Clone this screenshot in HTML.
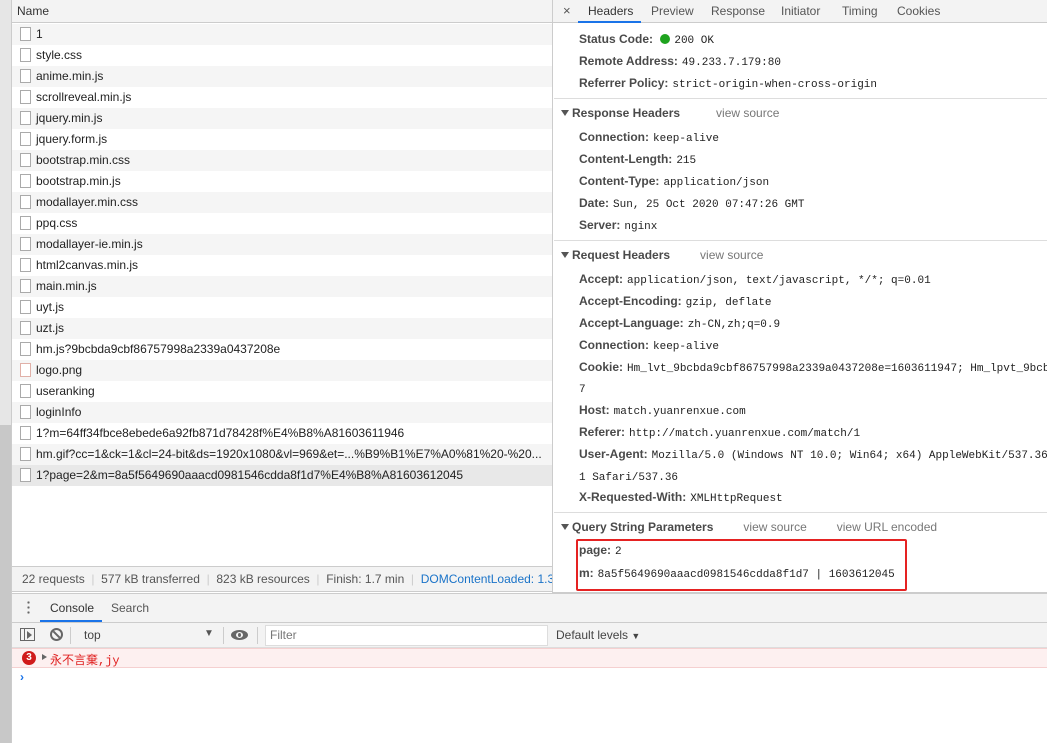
<!DOCTYPE html>
<html><head><meta charset="utf-8"><style>
*{margin:0;padding:0;box-sizing:border-box}
html,body{width:1047px;height:743px;overflow:hidden}
body{background:#fff;font-family:"Liberation Sans","Noto Sans CJK SC",sans-serif;font-size:12px;color:#333;position:relative}
#w{position:absolute;left:0;top:0;width:1047px;height:743px;overflow:hidden}
.a{position:absolute;white-space:nowrap}
.row{position:absolute;left:12px;width:540px;height:21px;line-height:21px;padding-left:24px;color:#222}
.row i{position:absolute;left:8px;top:3px;width:11px;height:14px;border:1px solid #aaa;background:#fff}
.g{background:#f5f5f5}
.hd{position:absolute;left:579px;color:#4a4a4a;font-weight:bold;white-space:nowrap}
.hd span{font-family:"Liberation Mono",monospace;font-weight:normal;font-size:11px;color:#222;margin-left:4px}
.sec{position:absolute;left:561px;font-weight:bold;color:#4a4a4a;white-space:nowrap}
.sec:before{content:"";display:inline-block;border:4px solid transparent;border-top:6px solid #555;border-bottom:0;margin-right:3px;vertical-align:1px}
.vs{font-weight:normal;color:#777;margin-left:36px}
.sep{position:absolute;left:554px;right:0;height:1px;background:#ddd}
</style></head><body><div id="w">
<div class="a" style="left:0;top:0;width:11px;height:425px;background:#e6e6e6"></div>
<div class="a" style="left:0;top:425px;width:11px;height:318px;background:#c8c8c8"></div>
<div class="a" style="left:11px;top:0;width:1px;height:743px;background:#ccc"></div>
<div class="a" style="left:12px;top:0;width:540px;height:23px;background:#f3f3f3;border-bottom:1px solid #ccc;line-height:22px;padding-left:5px;color:#333">Name</div>
<div class="a" style="left:552px;top:0;width:1px;height:593px;background:#ccc"></div>
<div class="row g" style="top:24px"><i></i>1</div>
<div class="row" style="top:45px"><i></i>style.css</div>
<div class="row g" style="top:66px"><i></i>anime.min.js</div>
<div class="row" style="top:87px"><i></i>scrollreveal.min.js</div>
<div class="row g" style="top:108px"><i></i>jquery.min.js</div>
<div class="row" style="top:129px"><i></i>jquery.form.js</div>
<div class="row g" style="top:150px"><i></i>bootstrap.min.css</div>
<div class="row" style="top:171px"><i></i>bootstrap.min.js</div>
<div class="row g" style="top:192px"><i></i>modallayer.min.css</div>
<div class="row" style="top:213px"><i></i>ppq.css</div>
<div class="row g" style="top:234px"><i></i>modallayer-ie.min.js</div>
<div class="row" style="top:255px"><i></i>html2canvas.min.js</div>
<div class="row g" style="top:276px"><i></i>main.min.js</div>
<div class="row" style="top:297px"><i></i>uyt.js</div>
<div class="row g" style="top:318px"><i></i>uzt.js</div>
<div class="row" style="top:339px"><i></i>hm.js?9bcbda9cbf86757998a2339a0437208e</div>
<div class="row g" style="top:360px"><i style="border-color:#e0b0a8"></i>logo.png</div>
<div class="row" style="top:381px"><i></i>useranking</div>
<div class="row g" style="top:402px"><i></i>loginInfo</div>
<div class="row" style="top:423px"><i></i>1?m=64ff34fbce8ebede6a92fb871d78428f%E4%B8%A81603611946</div>
<div class="row g" style="top:444px"><i></i>hm.gif?cc=1&amp;ck=1&amp;cl=24-bit&amp;ds=1920x1080&amp;vl=969&amp;et=...%B9%B1%E7%A0%81%20-%20...</div>
<div class="row" style="top:465px;background:#e8e8e8"><i></i>1?page=2&amp;m=8a5f5649690aaacd0981546cdda8f1d7%E4%B8%A81603612045</div>
<div class="a" style="left:12px;top:566px;width:540px;height:26px;background:#f3f3f3;border-top:1px solid #ccc;border-bottom:1px solid #ccc;line-height:25px;padding-left:10px;color:#555;overflow:hidden">22 requests <span style="color:#ccc">&nbsp;|&nbsp;</span> 577 kB transferred <span style="color:#ccc">&nbsp;|&nbsp;</span> 823 kB resources <span style="color:#ccc">&nbsp;|&nbsp;</span> Finish: 1.7 min <span style="color:#ccc">&nbsp;|&nbsp;</span> <span style="color:#1a73c8">DOMContentLoaded: 1.3</span></div>
<div class="a" style="left:553px;top:0;right:0;height:23px;background:#f3f3f3;border-bottom:1px solid #ccc"></div>
<div class="a" style="left:563px;top:3px;color:#555;font-size:13px">×</div>
<div class="a" style="left:578px;top:0;width:63px;height:23px;border-bottom:2px solid #1a73e8"></div>
<div class="a" style="left:588px;top:4px;color:#333">Headers</div>
<div class="a" style="left:651px;top:4px;color:#555">Preview</div>
<div class="a" style="left:711px;top:4px;color:#555">Response</div>
<div class="a" style="left:781px;top:4px;color:#555">Initiator</div>
<div class="a" style="left:842px;top:4px;color:#555">Timing</div>
<div class="a" style="left:897px;top:4px;color:#555">Cookies</div>
<div class="hd" style="top:32px">Status Code: <span style="display:inline-block;width:10px;height:10px;border-radius:50%;background:#1ea31e;vertical-align:-1px"></span><span>200 OK</span></div>
<div class="hd" style="top:54px">Remote Address:<span>49.233.7.179:80</span></div>
<div class="hd" style="top:76px">Referrer Policy:<span>strict-origin-when-cross-origin</span></div>
<div class="sep" style="top:98px"></div>
<div class="sec" style="top:106px">Response Headers<span class="vs">view source</span></div>
<div class="hd" style="top:130px">Connection:<span>keep-alive</span></div>
<div class="hd" style="top:152px">Content-Length:<span>215</span></div>
<div class="hd" style="top:174px">Content-Type:<span>application/json</span></div>
<div class="hd" style="top:196px">Date:<span>Sun, 25 Oct 2020 07:47:26 GMT</span></div>
<div class="hd" style="top:218px">Server:<span>nginx</span></div>
<div class="sep" style="top:240px"></div>
<div class="sec" style="top:248px">Request Headers<span class="vs" style="margin-left:30px">view source</span></div>
<div class="hd" style="top:272px">Accept:<span>application/json, text/javascript, */*; q=0.01</span></div>
<div class="hd" style="top:294px">Accept-Encoding:<span>gzip, deflate</span></div>
<div class="hd" style="top:316px">Accept-Language:<span>zh-CN,zh;q=0.9</span></div>
<div class="hd" style="top:338px">Connection:<span>keep-alive</span></div>
<div class="hd" style="top:360px">Cookie:<span>Hm_lvt_9bcbda9cbf86757998a2339a0437208e=1603611947; Hm_lpvt_9bcb</span></div>
<div class="hd" style="top:381px"><span style="margin:0">7</span></div>
<div class="hd" style="top:403px">Host:<span>match.yuanrenxue.com</span></div>
<div class="hd" style="top:425px">Referer:<span>http://match.yuanrenxue.com/match/1</span></div>
<div class="hd" style="top:447px">User-Agent:<span>Mozilla/5.0 (Windows NT 10.0; Win64; x64) AppleWebKit/537.36</span></div>
<div class="hd" style="top:469px"><span style="margin:0">1 Safari/537.36</span></div>
<div class="hd" style="top:490px">X-Requested-With:<span>XMLHttpRequest</span></div>
<div class="sep" style="top:512px"></div>
<div class="sec" style="top:520px">Query String Parameters<span class="vs" style="margin-left:30px">view source</span><span class="vs" style="margin-left:30px">view URL encoded</span></div>
<div class="hd" style="top:543px">page:<span>2</span></div>
<div class="hd" style="top:566px">m:<span>8a5f5649690aaacd0981546cdda8f1d7 | 1603612045</span></div>
<div class="a" style="left:576px;top:539px;width:331px;height:52px;border:2px solid #e52222;border-radius:2px"></div>
<div class="a" style="left:553px;top:592px;right:0;height:1px;background:#ccc"></div>
<div class="a" style="left:12px;top:593px;right:0;height:30px;background:#f3f3f3;border-top:1px solid #ccc;border-bottom:1px solid #ccc"></div>
<div class="a" style="left:27px;top:600px;width:3px;height:14px;background:radial-gradient(circle,#666 1px,transparent 1.3px) 0 0/3px 5px"></div>
<div class="a" style="left:40px;top:596px;width:62px;height:26px;border-bottom:2px solid #1a73e8"></div>
<div class="a" style="left:50px;top:601px;color:#333">Console</div>
<div class="a" style="left:111px;top:601px;color:#555">Search</div>
<div class="a" style="left:12px;top:623px;right:0;height:25px;background:#f3f3f3;border-bottom:1px solid #ddd"></div>
<div class="a" style="left:20px;top:628px;width:15px;height:13px;border:1px solid #666"></div>
<div class="a" style="left:24px;top:628px;width:1px;height:13px;background:#666"></div>
<div class="a" style="left:27px;top:631px;border:4px solid transparent;border-left:5px solid #666;border-right:0"></div>
<div class="a" style="left:50px;top:628px;width:13px;height:13px;border:2px solid #666;border-radius:50%;overflow:hidden"><div style="position:absolute;left:4px;top:-2px;width:2px;height:14px;background:#666;transform:rotate(-45deg)"></div></div>
<div class="a" style="left:70px;top:627px;width:1px;height:17px;background:#ccc"></div>
<div class="a" style="left:84px;top:628px;color:#444">top</div>
<div class="a" style="left:204px;top:628px;color:#555;font-size:10px">▼</div>
<div class="a" style="left:223px;top:627px;width:1px;height:17px;background:#ccc"></div>
<div class="a" style="left:231px;top:630px;width:17px;height:10px;border-radius:50%;background:#666"></div>
<div class="a" style="left:236px;top:632px;width:7px;height:6px;border-radius:50%;background:#f3f3f3"></div>
<div class="a" style="left:238px;top:633px;width:3px;height:4px;border-radius:50%;background:#666"></div>
<div class="a" style="left:257px;top:627px;width:1px;height:17px;background:#ccc"></div>
<div class="a" style="left:265px;top:625px;width:283px;height:21px;background:#fff;border:1px solid #ddd;line-height:19px;padding-left:4px;color:#777">Filter</div>
<div class="a" style="left:556px;top:628px;color:#444">Default levels <span style="font-size:9px">▼</span></div>
<div class="a" style="left:12px;top:648px;right:0;height:20px;background:#fdf0f0;border-bottom:1px solid #f5d0d0;border-top:1px solid #f5d0d0"></div>
<div class="a" style="left:22px;top:651px;width:14px;height:14px;border-radius:50%;background:#d01b1b;color:#fff;font-size:10px;font-weight:bold;text-align:center;line-height:14px">3</div>
<div class="a" style="left:42px;top:654px;border:3px solid transparent;border-left:5px solid #666;border-right:0"></div>
<div class="a" style="left:50px;top:651px;color:#e02020;font-family:'Liberation Mono','Noto Sans CJK SC',monospace">永不言棄,jy</div>
<div class="a" style="left:20px;top:670px;color:#1a73e8;font-size:12px;font-weight:bold">›</div>
</div></body></html>
